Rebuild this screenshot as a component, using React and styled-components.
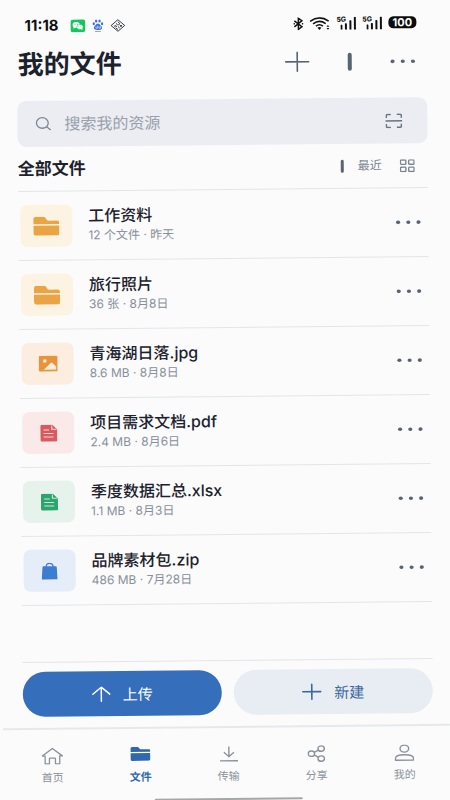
import React from "react";
import styled, { createGlobalStyle } from "styled-components";

const files = [
  { name: "工作资料", meta: "12 个文件 · 昨天", kind: "folder" },
  { name: "旅行照片", meta: "36 张 · 8月8日", kind: "folder" },
  { name: "青海湖日落.jpg", meta: "8.6 MB · 8月8日", kind: "image" },
  { name: "项目需求文档.pdf", meta: "2.4 MB · 8月6日", kind: "pdf" },
  { name: "季度数据汇总.xlsx", meta: "1.1 MB · 8月3日", kind: "sheet" },
  { name: "品牌素材包.zip", meta: "486 MB · 7月28日", kind: "zip" },
];

const kinds = {
  folder: { color: "#eaa443", background: "#fdf3e2", Icon: FolderIcon },
  image: { color: "#e8943c", background: "#fbeee1", Icon: ImageIcon },
  pdf: { color: "#d65a5f", background: "#fae9e9", Icon: DocIcon },
  sheet: { color: "#2ca46d", background: "#e6f3ec", Icon: DocIcon },
  zip: { color: "#3c7dd2", background: "#e5edf8", Icon: BagIcon },
};

const tabs = [
  { label: "首页", Icon: HomeIcon },
  { label: "文件", Icon: SmallFolderIcon, active: true },
  { label: "传输", Icon: DownloadIcon },
  { label: "分享", Icon: ShareIcon },
  { label: "我的", Icon: UserIcon },
];

export default function App() {
  return (
    <>
      <GlobalStyle />
      <Page>
        <StatusBar>
          <StatusLeft>
            <Time>11:18</Time>
            <WechatIcon />
            <PawIcon />
            <DiamondIcon />
          </StatusLeft>
          <StatusRight>
            <BluetoothIcon />
            <WifiIcon />
            <Signal />
            <Signal />
            <Battery>100</Battery>
          </StatusRight>
        </StatusBar>

        <Header>
          <Title>我的文件</Title>
          <HeaderActions>
            <IconButton aria-label="添加">
              <PlusIcon size={25} height={21} />
            </IconButton>
            <Bar $width={4} $height={18} />
            <IconButton aria-label="更多">
              <DotsIcon />
            </IconButton>
          </HeaderActions>
        </Header>

        <SearchBox>
          <SearchIcon />
          <SearchInput type="text" aria-label="搜索" placeholder="搜索我的资源" />
          <IconButton type="button" aria-label="扫描">
            <ScanIcon />
          </IconButton>
        </SearchBox>

        <SectionHead>
          <SectionTitle>全部文件</SectionTitle>
          <SortGroup>
            <Bar $width={3} $height={13} />
            <SortButton>最近</SortButton>
            <IconButton aria-label="网格">
              <GridIcon />
            </IconButton>
          </SortGroup>
        </SectionHead>

        <FileList>
          {files.map((file) => {
            const { Icon, color, background } = kinds[file.kind];
            return (
              <FileRow key={file.name}>
                <FileTile $color={color} $background={background}>
                  <Icon />
                </FileTile>
                <FileText>
                  <FileName>{file.name}</FileName>
                  <FileMeta>{file.meta}</FileMeta>
                </FileText>
                <IconButton aria-label={`${file.name} 更多`}>
                  <DotsIcon />
                </IconButton>
              </FileRow>
            );
          })}
        </FileList>

        <Actions>
          <ActionButton $primary>
            <ArrowUpIcon />
            上传
          </ActionButton>
          <ActionButton>
            <PlusIcon size={20} height={17} />
            新建
          </ActionButton>
        </Actions>

        <TabBar>
          {tabs.map(({ label, Icon, active }) => (
            <Tab key={label} href="#" $active={active}>
              <Icon />
              {label}
            </Tab>
          ))}
          <HomeIndicator />
        </TabBar>
      </Page>
    </>
  );
}

// Icons
function PlusIcon({ size, height }) {
  return (
    <svg width={size} height={height} viewBox={`0 0 ${size} ${height}`} fill="none" stroke="currentColor" strokeWidth="1.6" strokeLinecap="round">
      <path d={`M1 ${height / 2}H${size - 1}M${size / 2} 1V${height - 1}`} />
    </svg>
  );
}

function DotsIcon() {
  return (
    <svg width="26" height="6" viewBox="0 0 26 6" fill="currentColor">
      <ellipse cx="2.8" cy="3" rx="2.1" ry="1.8" />
      <ellipse cx="13" cy="3" rx="2.1" ry="1.8" />
      <ellipse cx="23.2" cy="3" rx="2.1" ry="1.8" />
    </svg>
  );
}

function SearchIcon() {
  return (
    <svg width="16" height="14" viewBox="0 0 16 14" fill="none" stroke="#7c8793" strokeWidth="1.3" strokeLinecap="round">
      <ellipse cx="7" cy="6.2" rx="5.9" ry="5.3" />
      <path d="M11.3 10L15 13" />
    </svg>
  );
}

function ScanIcon() {
  return (
    <svg width="17" height="15" viewBox="0 0 17 15" fill="none" stroke="#687583" strokeWidth="1.5">
      <path d="M1 4.5V2Q1 1 2 1H5.5M11.5 1H15Q16 1 16 2V4.5M1 10.5V13Q1 14 2 14H5.5M11.5 14H15Q16 14 16 13V10.5M0 7.5H17" />
    </svg>
  );
}

function GridIcon() {
  return (
    <svg width="15" height="13" viewBox="0 0 15 13" fill="none" stroke="#7b8590" strokeWidth="1.4">
      <rect x="0.7" y="0.7" width="5.4" height="4.4" rx="0.8" />
      <rect x="8.9" y="0.7" width="5.4" height="4.4" rx="0.8" />
      <rect x="0.7" y="7.9" width="5.4" height="4.4" rx="0.8" />
      <rect x="8.9" y="7.9" width="5.4" height="4.4" rx="0.8" />
    </svg>
  );
}

function FolderIcon() {
  return (
    <svg width="26" height="19" viewBox="0 0 26 19" fill="currentColor">
      <path d="M0 7.3V3Q0 0 3 0H9.5Q12.3 0 12.8 2Q13.2 4 15.5 4H23.5Q26 4 26 6.5V7.3Z" />
      <path d="M0 8.8H26V16.5Q26 19 23.5 19H2.5Q0 19 0 16.5Z" />
    </svg>
  );
}

function SmallFolderIcon() {
  return (
    <svg width="20" height="14" viewBox="0 0 20 14" fill="currentColor">
      <path d="M0 5V1.8Q0 0 1.8 0H7.5L9.8 2.5H18.5Q20 2.5 20 4V5Z" />
      <path d="M0 6.3H20V12.3Q20 14 18.2 14H1.8Q0 14 0 12.3Z" />
    </svg>
  );
}

function ImageIcon() {
  return (
    <svg width="19" height="16" viewBox="0 0 19 16">
      <rect width="19" height="16" rx="1.5" fill="currentColor" />
      <circle cx="6.2" cy="5.2" r="1.8" fill="#fbeee1" />
      <path d="M5 14L12.5 7Q13 6.5 13.5 7L17.5 11V14Z" fill="#fbeee1" />
    </svg>
  );
}

function DocIcon() {
  return (
    <svg width="17" height="17" viewBox="0 0 17 17">
      <path d="M1.5 0H12L17 4.8V15.5Q17 17 15.5 17H1.5Q0 17 0 15.5V1.5Q0 0 1.5 0Z" fill="currentColor" />
      <path d="M11.5 0.8V4.6H16.2M3.3 5.3H8.8M3.3 8.8H13.2M3.3 12.3H13.2" fill="none" stroke="#fff" strokeOpacity="0.75" strokeWidth="1.1" />
    </svg>
  );
}

function BagIcon() {
  return (
    <svg width="16" height="17" viewBox="0 0 16 17">
      <path d="M1.8 3.5H14.2Q15 3.5 15.1 4.5L16 17H0L0.9 4.5Q1 3.5 1.8 3.5Z" fill="currentColor" />
      <path d="M4.5 5V3.5Q5 0.7 8 0.7Q11 0.7 11.5 3.5V5" fill="none" stroke="currentColor" strokeWidth="1.2" />
    </svg>
  );
}

function ArrowUpIcon() {
  return (
    <svg width="19" height="16" viewBox="0 0 19 16" fill="none" stroke="currentColor" strokeWidth="1.5" strokeLinecap="round" strokeLinejoin="round">
      <path d="M9.5 15V1M1 8L9.5 1L18 8" />
    </svg>
  );
}

function HomeIcon() {
  return (
    <svg width="22" height="17" viewBox="0 0 22 17" fill="none" stroke="currentColor" strokeWidth="1.3" strokeLinejoin="round">
      <path d="M11 0.8L1 8.3H3.7V16.2H8V11Q8 10.4 8.6 10.4H13.4Q14 10.4 14 11V16.2H18.3V8.3H21Z" />
    </svg>
  );
}

function DownloadIcon() {
  return (
    <svg width="19" height="16" viewBox="0 0 19 16" fill="none" stroke="currentColor" strokeWidth="1.4">
      <path d="M9.5 0.5V10.5M4.5 6.3L9.5 10.7L14.5 6.3M0.5 14.8H18.5" />
    </svg>
  );
}

function ShareIcon() {
  return (
    <svg width="18" height="17" viewBox="0 0 18 17" fill="none" stroke="currentColor" strokeWidth="1.4">
      <ellipse cx="13.8" cy="3.5" rx="3.2" ry="2.7" />
      <ellipse cx="4" cy="8.5" rx="3.2" ry="2.7" />
      <ellipse cx="13.8" cy="13.5" rx="3.2" ry="2.7" />
      <path d="M6.8 7.1L11 4.9M6.8 9.9L11 12.1" />
    </svg>
  );
}

function UserIcon() {
  return (
    <svg width="20" height="17" viewBox="0 0 20 17" fill="none" stroke="currentColor" strokeWidth="1.4">
      <ellipse cx="10" cy="4.3" rx="4.3" ry="3.5" />
      <path d="M1 15.8V14Q1 10.5 10 10.5Q19 10.5 19 14V15.8Z" strokeLinejoin="round" />
    </svg>
  );
}

function WechatIcon() {
  return (
    <svg width="15" height="13" viewBox="0 0 15 13">
      <rect width="15" height="13" rx="3" fill="#12c85c" />
      <ellipse cx="5.8" cy="5.5" rx="3.6" ry="2.9" fill="#fff" />
      <path d="M3.3 7.2L3 9.3L5.2 8Z" fill="#fff" />
      <ellipse cx="9.5" cy="7.6" rx="3.2" ry="2.5" fill="#fff" stroke="#12c85c" strokeWidth="0.5" />
      <path d="M10.5 9.3L11.8 10.8L12 8.8Z" fill="#fff" />
      <g fill="#12c85c">
        <circle cx="4.6" cy="4.8" r="0.5" />
        <circle cx="7" cy="4.8" r="0.5" />
        <circle cx="8.5" cy="7.2" r="0.4" />
        <circle cx="10.5" cy="7.2" r="0.4" />
      </g>
    </svg>
  );
}

function PawIcon() {
  return (
    <svg width="11" height="13" viewBox="0 0 11 13" fill="#3d73dc">
      <ellipse cx="3.8" cy="1.8" rx="1.2" ry="1.6" />
      <ellipse cx="7.2" cy="1.8" rx="1.2" ry="1.6" />
      <ellipse cx="1.3" cy="4.5" rx="1.2" ry="1.5" />
      <ellipse cx="9.7" cy="4.5" rx="1.2" ry="1.5" />
      <path d="M5.5 4.2Q7 4.2 8 6Q10 7.6 9.6 9.3Q9 11 5.5 10.8Q2 11 1.4 9.3Q1 7.6 3 6Q4 4.2 5.5 4.2Z" />
      <path d="M3.5 7.5V9H5V6.5M6.5 7V9H8V7" fill="none" stroke="#dfe9ff" strokeWidth="0.7" />
      <path d="M2.5 12.3H8.5" stroke="#b38ad8" strokeWidth="0.9" />
    </svg>
  );
}

function DiamondIcon() {
  return (
    <svg width="15" height="13" viewBox="0 0 15 13" fill="none" stroke="#25282b" strokeWidth="0.9">
      <path d="M7.5 0.7L14.3 6.5L7.5 12.3L0.7 6.5Z" strokeLinejoin="round" />
      <path d="M5.6 4.4L7.4 5.9M7.5 2.8L9.2 4.3M3.4 6.5L5.2 8M9.2 6L11.4 7.6M7.5 7.6L9.3 9.1M5.4 8.8L7.5 10.6M4.8 6.4L6.6 7.6M9.6 4.4L7.8 6M11.6 6.2L9.8 7.6" />
    </svg>
  );
}

function BluetoothIcon() {
  return (
    <svg width="10" height="13" viewBox="0 0 10 13" fill="none" stroke="#111" strokeWidth="1.5">
      <path d="M1 3.5L8.5 9.5L5 12V1L8.500 3.5L1 9.5" />
      <path d="M0 6.5H1.5M8.5 6.5H10" />
    </svg>
  );
}

function WifiIcon() {
  return (
    <svg width="21" height="13" viewBox="0 0 21 13" fill="none" stroke="#111" strokeWidth="1.6">
      <path d="M0.7 4.2Q10 -2.5 19.3 4.2" />
      <path d="M3.7 6.7Q10 2 16.3 6.7" />
      <path d="M6.5 9.1Q10 6.3 13.5 9.1" />
      <path d="M8 10.7Q10 9.3 12 10.7L10 12.8Z" fill="#111" stroke="none" />
      <path d="M17 9.8L18.5 8L20 9.8ZM17 11L18.5 12.8L20 11Z" fill="#111" stroke="none" />
    </svg>
  );
}

function Signal() {
  return (
    <SignalBox>
      <SignalLabel>5G</SignalLabel>
      <svg width="16" height="13" viewBox="0 0 16 13" fill="#111">
        <rect x="0" y="8" width="2" height="5" rx="0.5" />
        <rect x="4.5" y="6.5" width="2" height="6.5" rx="0.5" />
        <rect x="9" y="3.5" width="2" height="9.5" rx="0.5" />
        <rect x="13.5" y="0" width="2" height="13" rx="0.5" />
      </svg>
    </SignalBox>
  );
}

const GlobalStyle = createGlobalStyle`
  * {
    box-sizing: border-box;
  }

  body {
    margin: 0;
    overflow: hidden;
    background: #fbfbfc;
    font-family: Inter, "Noto Sans CJK SC", sans-serif;
  }

  svg {
    display: block;
    flex-shrink: 0;
  }

  button,
  input {
    font-family: inherit;
  }
`;

/* The whole screen leans slightly to the left */
const Page = styled.main`
  display: flex;
  flex-direction: column;
  min-height: 100vh;
  transform: rotate(-0.55deg);
`;

const StatusBar = styled.div`
  display: flex;
  justify-content: space-between;
  align-items: center;
  height: 40px;
  padding: 8px 30px 0 28px;
`;

const StatusLeft = styled.div`
  display: flex;
  align-items: center;
  gap: 7px;
`;

const StatusRight = styled.div`
  display: flex;
  align-items: center;
  gap: 6px;
`;

const Time = styled.span`
  margin-right: 5px;
  font-size: 15px;
  line-height: 16px;
  font-weight: 700;
  color: #111;
`;

const SignalBox = styled.span`
  position: relative;
  padding-left: 4px;
`;

const SignalLabel = styled.span`
  position: absolute;
  top: -1px;
  left: 0;
  font-size: 7px;
  line-height: 7px;
  font-weight: 700;
  color: #111;
`;

const Battery = styled.span`
  width: 28px;
  border-radius: 5px;
  background: #0c0c0c;
  color: #fff;
  font-size: 11px;
  font-weight: 700;
  line-height: 12px;
  text-align: center;
`;

const Header = styled.header`
  display: flex;
  justify-content: space-between;
  align-items: center;
  height: 45px;
  padding: 0 31px 0 21px;
`;

const Title = styled.h1`
  margin: 0;
  font-size: 26px;
  line-height: 32px;
  font-weight: 700;
  color: #1b222d;
`;

const HeaderActions = styled.div`
  display: flex;
  align-items: center;
  gap: 38px;
`;

const IconButton = styled.button`
  display: flex;
  align-items: center;
  justify-content: center;
  padding: 0;
  border: 0;
  background: none;
  color: #596471;
  cursor: pointer;
`;

const Bar = styled.span`
  width: ${({ $width }) => $width}px;
  height: ${({ $height }) => $height}px;
  border-radius: 2px;
  background: #596471;
`;

const SearchBox = styled.form`
  display: flex;
  align-items: center;
  gap: 13px;
  height: 46px;
  margin: 14px 20px 0;
  padding: 0 25px 0 18px;
  border-radius: 9px;
  background: #ebedf2;
`;

const SearchInput = styled.input`
  flex: 1;
  min-width: 0;
  padding: 0;
  border: 0;
  outline: none;
  background: none;
  font-size: 16px;
  color: #1b222d;

  &::placeholder {
    color: #98a1ac;
    opacity: 1;
  }
`;

const SectionHead = styled.div`
  display: flex;
  justify-content: space-between;
  align-items: center;
  height: 45px;
  margin: 0 20px;
  padding-right: 13px;
  border-bottom: 1px solid #e3e5e8;
`;

const SectionTitle = styled.h2`
  margin: 0;
  font-size: 17px;
  line-height: 24px;
  font-weight: 700;
  color: #1b222d;
`;

const SortGroup = styled.div`
  display: flex;
  align-items: center;
  gap: 14px;
`;

const SortButton = styled.button`
  padding: 0;
  margin-right: 4px;
  border: 0;
  background: none;
  font-size: 12px;
  line-height: 20px;
  color: #7b8590;
  cursor: pointer;
`;

const FileList = styled.ul`
  flex: 1;
  margin: 0 20px;
  padding: 0;
  list-style: none;
`;

const FileRow = styled.li`
  display: flex;
  align-items: center;
  height: 69px;
  padding: 0 7px 0 2px;
  border-bottom: 1px solid #e3e5e8;
`;

const FileTile = styled.div`
  display: flex;
  align-items: center;
  justify-content: center;
  width: 52px;
  height: 42px;
  border-radius: 7px;
  color: ${({ $color }) => $color};
  background: ${({ $background }) => $background};
`;

const FileText = styled.div`
  flex: 1;
  min-width: 0;
  margin-left: 16px;
`;

const FileName = styled.div`
  font-size: 16px;
  line-height: 20px;
  font-weight: 500;
  color: #1b222d;
`;

const FileMeta = styled.div`
  font-size: 12px;
  line-height: 20px;
  color: #87909a;
`;

const Actions = styled.div`
  display: flex;
  gap: 12px;
  margin: 0 20px;
  padding: 9px 0 11px;
  border-top: 1px solid #e3e5e8;
`;

const ActionButton = styled.button`
  display: flex;
  flex: 1;
  align-items: center;
  justify-content: center;
  gap: 12px;
  height: 45px;
  border: 0;
  border-radius: 23px;
  font-size: 15px;
  color: ${({ $primary }) => ($primary ? "#fff" : "#3c68a0")};
  background: ${({ $primary }) => ($primary ? "#356fbc" : "#e8edf3")};
  cursor: pointer;
`;

const TabBar = styled.nav`
  position: relative;
  display: flex;
  height: 74px;
  padding: 18px 5px 0;
  border-top: 2px solid #e6e9eb;
`;

const Tab = styled.a`
  display: flex;
  flex: 1;
  flex-direction: column;
  align-items: center;
  justify-content: space-between;
  height: 38px;
  font-size: 11px;
  line-height: 16px;
  font-weight: ${({ $active }) => ($active ? 700 : 400)};
  color: ${({ $active }) => ($active ? "#2f68ae" : "#8b929a")};
  text-decoration: none;
`;

const HomeIndicator = styled.span`
  position: absolute;
  bottom: 0;
  left: 50%;
  width: 148px;
  height: 2px;
  margin-left: -74px;
  border-radius: 2px;
  background: #a4a6a8;
`;
